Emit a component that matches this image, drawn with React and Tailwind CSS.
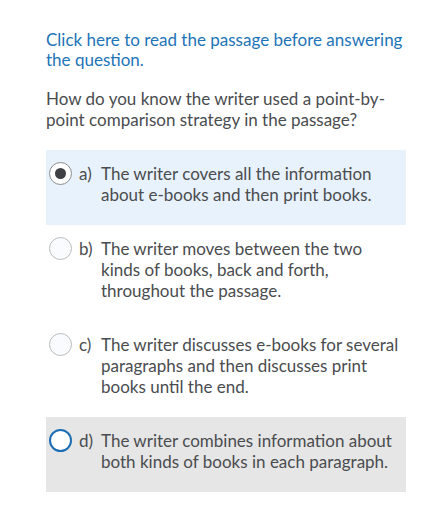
const options = [
  { key: "a", text: "The writer covers all the information about e-books and then print books.", state: "selected" },
  { key: "b", text: "The writer moves between the two kinds of books, back and forth, throughout the passage.", state: "idle" },
  { key: "c", text: "The writer discusses e-books for several paragraphs and then discusses print books until the end.", state: "idle" },
  { key: "d", text: "The writer combines information about both kinds of books in each paragraph.", state: "focus" },
];

function Radio({ state }) {
  if (state === "selected") {
    return (
      <span className="flex h-[23px] w-[23px] shrink-0 items-center justify-center rounded-full border border-[#8a8c8e] bg-white">
        <span className="h-[11px] w-[11px] rounded-full bg-[#3e4043]" />
      </span>
    );
  }
  if (state === "focus") {
    return <span className="h-[23px] w-[23px] shrink-0 rounded-full border-2 border-[#1c6db3] bg-white" />;
  }
  return <span className="h-[23px] w-[23px] shrink-0 rounded-full border border-[#b9bcbf] bg-[#f9fbff]" />;
}

function Option({ option }) {
  const bg =
    option.state === "selected" ? "bg-[#e8f2fc]" : option.state === "focus" ? "bg-[#e6e6e6]" : "bg-white";
  return (
    <label className={`flex items-start pl-[3px] pr-1 pt-[13px] pb-5 ${bg}`}>
      <span className="flex h-[21px] items-center">
        <Radio state={option.state} />
      </span>
      <span className="ml-[7px] w-[22px] shrink-0">{option.key})</span>
      <span>{option.text}</span>
    </label>
  );
}

export default function App() {
  return (
    <div
      className="min-h-[512px] bg-white pl-[46px] pr-[26px] pt-[30px] text-[17px] text-[#4a4c4f]"
      style={{ fontFamily: "Lato, 'Noto Sans', sans-serif" }}
    >
      <a className="block leading-[20px] text-[#1d74b7]">
        Click here to read the passage before answering the question.
      </a>
      <p className="mt-[18px] pr-[20px] leading-[21px]">
        How do you know the writer used a point-by-point comparison strategy in the passage?
      </p>
      <div className="mt-5 leading-[21px]">
        {options.map((o) => (
          <Option key={o.key} option={o} />
        ))}
      </div>
    </div>
  );
}
